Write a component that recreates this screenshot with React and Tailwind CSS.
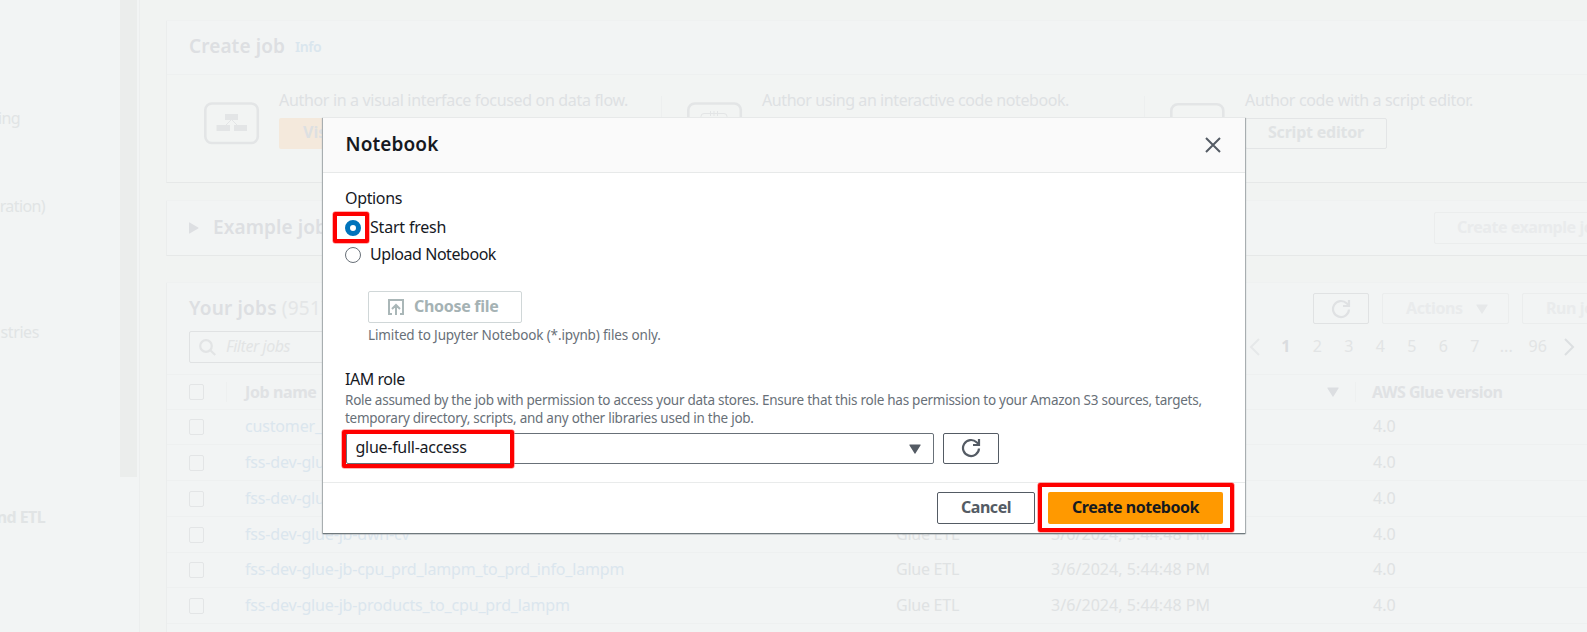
import React from 'react';

const jobs = [
  { name: 'customer_glue_job', h: 'h-[35px]' },
  { name: 'fss-dev-glue-jb-cust', h: 'h-9' },
  { name: 'fss-dev-glue-jb-dwh', h: 'h-9' },
  { name: 'fss-dev-glue-jb-dwh-cv', h: 'h-9' },
  { name: 'fss-dev-glue-jb-cpu_prd_lampm_to_prd_info_lampm', h: 'h-[35px]' },
  { name: 'fss-dev-glue-jb-products_to_cpu_prd_lampm', h: 'h-9' },
];

const pages = ['1', '2', '3', '4', '5', '6', '7', '...', '96'];

function Refresh({ className }) {
  return (
    <svg className={className} width="20" height="20" viewBox="0 0 20 20" fill="none" stroke="currentColor" strokeWidth="2.200">
      <path d="M18 10.500a8 8 0 1 1-2.400-6.200L17.600 6" />
      <path d="M18 1v6h-6" />
    </svg>
  );
}

function CaretDown({ className }) {
  return (
    <svg className={className} width="12" height="10" viewBox="0 0 12 10" fill="currentColor">
      <path d="M0.8 0.5h10.4a.5.5 0 0 1 .4.8L6.4 9.4a.5.5 0 0 1-.8 0L.4 1.300a.5.5 0 0 1 .4-.8z" />
    </svg>
  );
}

function Chevron({ className, d }) {
  return (
    <svg className={className} width="11" height="18" viewBox="0 0 11 18" fill="none" stroke="currentColor" strokeWidth="2">
      <path d={d} />
    </svg>
  );
}

function Checkbox() {
  return <span className="block h-4 w-[15px] shrink-0 rounded-[2px] border border-[#e3e5e6]" />;
}

function JobCard({ icon, text, tracking, button, divider }) {
  return (
    <div className="flex h-[76px] w-[483px] shrink-0">
      <div className={`h-[76px] w-px ${divider ? 'bg-[#edefef]' : ''}`} />
      <div className="mt-[6px] ml-[25px] w-[75px] shrink-0">{icon}</div>
      <div>
        <p className={`-mt-[6px] h-[28px] whitespace-nowrap text-[#dee1e3] ${tracking}`}>{text}</p>
        {button}
      </div>
    </div>
  );
}

function VisualIcon() {
  return (
    <svg width="56" height="43" viewBox="0 0 56 43" fill="none" stroke="#e3e5e6">
      <rect x="1.3" y="1.5" width="52.500" height="39.500" rx="6.500" strokeWidth="2.600" />
      <path d="M27 18l-8 8M28 18l8 8" />
      <g fill="#e3e5e6" stroke="none">
        <rect x="21" y="12" width="13" height="6" />
        <rect x="12.500" y="23" width="13.500" height="6" />
        <rect x="30" y="23" width="13" height="6" />
      </g>
    </svg>
  );
}

function NotebookIcon() {
  return (
    <svg width="56" height="43" viewBox="0 0 56 43" fill="none" stroke="#e3e5e6">
      <rect x="1.3" y="1.5" width="52.500" height="39.500" rx="6.500" strokeWidth="2.600" />
      <rect x="14" y="11.500" width="26" height="22" rx="3" />
      <path d="M23.500 9v5M27 9v5M30.500 9v5" />
    </svg>
  );
}

function ScriptIcon() {
  return (
    <svg width="56" height="43" viewBox="0 0 56 43" fill="none" stroke="#e3e5e6">
      <rect x="1.3" y="2.300" width="52" height="39" rx="6.500" strokeWidth="2.600" />
      <path d="M20 16l-7 6 7 6M35 16l7 6-7 6" strokeWidth="2" />
    </svg>
  );
}

function Sidebar() {
  return (
    <aside className="flex h-full w-[120px] shrink-0 flex-col overflow-hidden whitespace-nowrap text-[#e1e4e5]">
      <div className="mt-[108px] flex h-5 w-5 justify-end tracking-[-0.6px]">ing</div>
      <div className="mt-[68px] flex h-5 w-[45px] justify-end tracking-[-0.6px]">ration)</div>
      <div className="mt-[106px] flex h-5 w-[39px] justify-end tracking-[-0.4px]">stries</div>
      <div className="mt-[165px] flex h-5 w-[45px] justify-end font-bold tracking-[-0.6px]">nd ETL</div>
    </aside>
  );
}

function CreateJobPanel() {
  return (
    <section className="h-[162px] border-b border-l border-[#e6e8e8] border-l-[#ebeded] bg-[#f2f4f3] shadow-[0_-1px_0_#eff1f1]">
      <div className="flex h-[54px] items-center border-b border-[#eef0f0] bg-[#f2f4f4] pb-1 pl-[22px]">
        <h2 className="text-[19px] leading-6 font-semibold tracking-[0.1px] text-[#dddfe2]">Create job</h2>
        <span className="mt-[3px] ml-[10px] text-sm leading-5 font-semibold tracking-[-0.4px] text-[#dae6ee]">Info</span>
      </div>
      <div className="mt-[21px] flex pl-[11px]">
        <JobCard
          icon={<VisualIcon />}
          tracking="tracking-[-0.33px]"
          text="Author in a visual interface focused on data flow."
          button={<div className="flex h-[31px] w-[126px] items-center rounded-[2px] bg-[#f4e9dc] pb-[3px] pl-6 font-bold text-[#dde0e2]">Visual ETL</div>}
        />
        <JobCard
          divider
          icon={<NotebookIcon />}
          tracking="tracking-[-0.42px]"
          text="Author using an interactive code notebook."
          button={<div className="h-[31px] w-[120px] rounded-[2px] border border-[#e3e5e6]" />}
        />
        <JobCard
          divider
          icon={<ScriptIcon />}
          tracking="tracking-[-0.33px]"
          text="Author code with a script editor."
          button={<div className="flex h-[31px] w-[142px] items-center rounded-[2px] border border-[#e3e5e6] pb-[3px] pl-[22px] font-bold tracking-[-0.22px] whitespace-nowrap text-[#e0e3e4]">Script editor</div>}
        />
      </div>
    </section>
  );
}

function ExamplePanel() {
  return (
    <section className="mt-[18px] flex h-[55px] items-center border-b border-l border-[#e6e8e8] border-l-[#ebeded] bg-[#f2f4f4] pl-[22px] shadow-[0_-1px_0_#eff1f1]">
      <svg className="shrink-0" width="10" height="12" viewBox="0 0 10 12" fill="#dddfe2">
        <path d="M0 .8v10.400a.4.4 0 0 0 .6.400L9.200 6.400a.4.4 0 0 0 0-.8L.6.400A.4.400 0 0 0 0 .8z" />
      </svg>
      <h2 className="ml-[14px] w-[1221px] shrink-0 pb-[3px] text-[19px] leading-6 font-semibold tracking-[0.1px] text-[#dddfe2]">Example jobs</h2>
      <div className="flex h-8 w-[200px] shrink-0 items-center rounded-[2px] border border-[#ebeded] pb-[2px] pl-[22px] font-bold tracking-[-0.45px] whitespace-nowrap text-[#e9ebec]">
        Create example job
      </div>
    </section>
  );
}

function JobsPanel() {
  return (
    <section className="mt-[27px] h-[349px] border-l border-[#ebeded] bg-[#f2f4f4] shadow-[0_-1px_0_#eff1f1]">
      <div className="flex h-[48px] items-start pt-[10px] pl-[22px]">
        <h2 className="mt-[3px] w-[1124px] shrink-0 text-[19px] leading-6 font-semibold tracking-[0.2px] text-[#dddfe2]">
          Your jobs <span className="font-normal text-[#e4e6e7]">(951)</span>
        </h2>
        <div className="flex h-[31px] w-14 shrink-0 items-center justify-center rounded-[2px] border border-[#e0e2e3] text-[#dfe1e3]">
          <Refresh />
        </div>
        <div className="ml-[13px] flex h-[31px] w-[127px] shrink-0 items-center rounded-[2px] border border-[#ebeded] pb-[2px] pl-[23px] font-bold tracking-[-0.4px] text-[#e9ebec]">
          Actions
          <CaretDown className="mt-[3px] ml-[13px] text-[#e6e8e9]" />
        </div>
        <div className="ml-[13px] flex h-[31px] w-[110px] shrink-0 items-center rounded-[2px] border border-[#ebeded] pb-[2px] pl-[23px] font-bold tracking-[-0.4px] whitespace-nowrap text-[#e9ebec]">
          Run job
        </div>
      </div>
      <div className="flex h-[43px] items-start pl-[22px]">
        <div className="flex h-8 w-[600px] shrink-0 items-center rounded-[2px] border border-[#e0e2e3] pl-[9px] text-[#e2e4e5]">
          <svg width="17" height="17" viewBox="0 0 17 17" fill="none" stroke="currentColor" strokeWidth="2.200">
            <circle cx="7" cy="7" r="5.800" />
            <path d="M11.300 11.300l5 4.700" />
          </svg>
          <span className="ml-[10px] pb-[2px] tracking-[-0.45px] italic">Filter jobs</span>
        </div>
        <div className="ml-[460px] flex h-8 shrink-0 items-center">
          <Chevron className="text-[#e6e8e9]" d="M10 1L2 9l8 8" />
          <div className="ml-[10px] flex pb-[2px] text-[#e2e4e5]">
            {pages.map((p, i) => (
              <span key={p} className={i === 0 ? 'w-[31.500px] text-center font-bold text-[#dadcdf]' : 'w-[31.500px] text-center'}>
                {p}
              </span>
            ))}
          </div>
          <Chevron className="ml-[10px] text-[#dcdfe1]" d="M1 1l8 8-8 8" />
        </div>
      </div>
      <div className="flex h-[35px] items-center border-t border-[#eef0f0] pl-[22px] font-bold text-[#e0e2e4]">
        <Checkbox />
        <span className="ml-[22px] h-5 w-px bg-[#eef0f0]" />
        <span className="ml-[18px] w-[1082px] shrink-0 tracking-[-0.4px]">Job name</span>
        <CaretDown className="shrink-0 text-[#dcdee1]" />
        <span className="ml-4 h-5 w-px shrink-0 bg-[#eef0f0]" />
        <span className="ml-[16px] tracking-[-0.5px] whitespace-nowrap">AWS Glue version</span>
      </div>
      {jobs.map((j) => (
        <div key={j.name} className={`flex items-center border-t border-[#eef0f0] pl-[22px] text-[#dfe2e3] ${j.h}`}>
          <Checkbox />
          <span className="ml-[41px] w-[651px] shrink-0 pb-[2px] tracking-[-0.17px] whitespace-nowrap text-[#dbe6ee]">{j.name}</span>
          <span className="w-[155px] shrink-0 pb-[2px] tracking-[-0.25px]">Glue ETL</span>
          <span className="w-[322px] shrink-0 pb-[2px] tracking-[0.06px]">3/6/2024, 5:44:48 PM</span>
          <span className="pb-[2px]">4.0</span>
        </div>
      ))}
      <div className="border-t border-[#eef0f0]" />
    </section>
  );
}

function Highlight({ className }) {
  return <span className={`pointer-events-none absolute rounded-[2px] border-4 border-[#fe0000] shadow-[0_0_0_0.5px_#ff6b6b] ${className}`} />;
}

function NotebookModal() {
  return (
    <div className="absolute top-[117px] left-[323px] flex h-[416px] w-[922px] flex-col bg-white text-[#16191f] shadow-[0_1px_1px_#6f797d,1px_1px_1px_#b4babb,-1px_1px_1px_#b4babb]">
      <header className="flex h-14 shrink-0 items-center justify-between border-t border-b border-[#e7e9e9] bg-[#fafafa] pr-[24px] pl-[22.5px]">
        <h1 className="pb-[3px] text-[19px] leading-6 font-semibold tracking-[0.1px]">Notebook</h1>
        <svg className="mb-px" width="16" height="16" viewBox="0 0 16 16" fill="none" stroke="#545b64" strokeWidth="2">
          <path d="M1 1l14 14M15 1L1 15" />
        </svg>
      </header>
      <div className="flex h-[309px] shrink-0 flex-col pl-[23px]">
        <p className="mt-[15px] -ml-px h-5 tracking-[-0.35px]">Options</p>
        <div className="relative mt-[10px] -ml-px flex h-5 items-center">
          <span className="h-4 w-4 rounded-full border-[5px] border-[#0073bb] bg-white" />
          <span className="ml-[9px] pb-[2px] tracking-[-0.2px]">Start fresh</span>
          <Highlight className="top-[-6px] left-[-12px] h-[31px] w-9" />
        </div>
        <div className="mt-[7px] -ml-px flex h-5 items-center">
          <span className="h-4 w-4 rounded-full border border-[#687078] bg-white" />
          <span className="ml-[9px] pb-[2px] tracking-[-0.45px]">Upload Notebook</span>
        </div>
        <div className="mt-[26px] ml-[22px] flex h-8 w-[154px] shrink-0 items-center rounded-[2px] border border-[#d0d7d8] pb-px pl-[19px] font-bold tracking-[-0.3px] text-[#a5b2b4]">
          <svg className="mt-px" width="16" height="16" viewBox="0 0 16 16" fill="none" stroke="#aab7b8" strokeWidth="2">
            <path d="M4 15H1V1h14v14h-3M8 16V6M4 10l4-4 4 4" />
          </svg>
          <span className="ml-[10px] pb-[2px]">Choose file</span>
        </div>
        <p className="mt-[2px] ml-[22px] h-5 shrink-0 text-[13.500px] tracking-[-0.13px] text-[#687078]">
          Limited to Jupyter Notebook (*.ipynb) files only.
        </p>
        <p className="mt-[24px] -ml-px h-5 shrink-0 tracking-[-0.45px]">IAM role</p>
        <p className="mt-[2px] -ml-px h-9 shrink-0 text-[13.500px] leading-[18px] tracking-[-0.26px] whitespace-nowrap text-[#687078]">
          Role assumed by the job with permission to access your data stores. Ensure that this role has permission to your Amazon S3 sources, targets,
          <br />
          temporary directory, scripts, and any other libraries used in the job.
        </p>
        <div className="relative mt-[6px] flex h-[31px] shrink-0">
          <div className="flex h-[31px] w-[588px] items-center justify-between rounded-[2px] border border-[#687078] pr-3 pb-px pl-[8.500px]">
            <span className="pb-[3px] tracking-[-0.28px]">glue-full-access</span>
            <CaretDown className="mt-[2px] text-[#545b64]" />
          </div>
          <div className="ml-[9px] flex h-[31px] w-14 items-center justify-center rounded-[2px] border border-[#545b64] pb-px text-[#545b64]">
            <Refresh />
          </div>
          <Highlight className="top-[-3px] left-[-4px] h-[38px] w-[172px]" />
        </div>
      </div>
      <footer className="flex grow justify-end border-t border-[#e9ebeb] pt-[9px] pr-[22px] font-bold">
        <div className="flex h-8 w-[98px] items-center justify-center rounded-[2px] border border-[#545b64] pb-[3px] tracking-[-0.45px] text-[#545b64]">Cancel</div>
        <div className="relative ml-[13px] flex h-8 w-[175px] items-center justify-center rounded-[2px] bg-[#ff9900] pb-[3px] tracking-[-0.45px]">
          Create notebook
          <Highlight className="top-[-9px] left-[-10px] h-[49px] w-[196px]" />
        </div>
      </footer>
    </div>
  );
}

export default function App() {
  return (
    <div className="relative flex h-[632px] w-[1587px] overflow-hidden bg-[#f2f4f4] font-['Noto_Sans','Open_Sans',sans-serif] text-base leading-5">
      <Sidebar />
      <div className="h-[477px] w-[17px] shrink-0 bg-[#ebedec]" />
      <div className="ml-[2px] w-px shrink-0 bg-[#eceeee]" />
      <main className="h-full w-[1461px] shrink-0 bg-[#f1f3f2] pt-[21px] pl-[26px]">
        <CreateJobPanel />
        <ExamplePanel />
        <JobsPanel />
      </main>
      <NotebookModal />
    </div>
  );
}
